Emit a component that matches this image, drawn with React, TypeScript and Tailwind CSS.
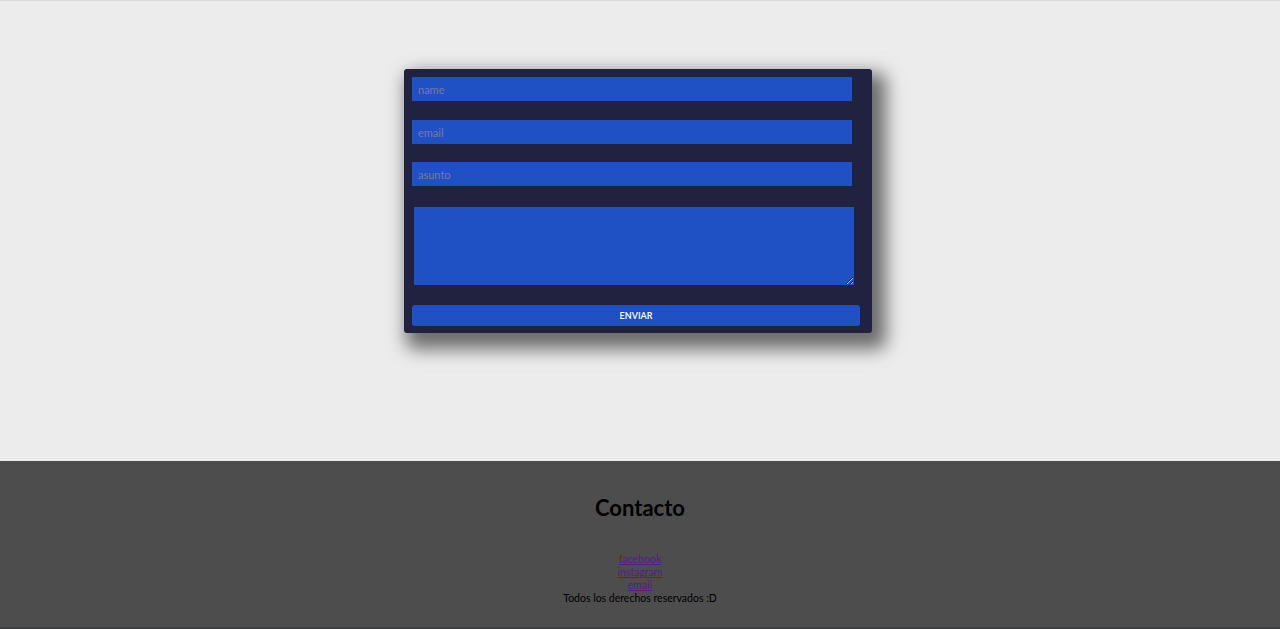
import React from 'react';

export default function App() {
  return (
    <div className="min-h-[629px] bg-[#ececec] font-['Lato','Open_Sans',sans-serif]">
      <main className="h-[461px] border-t border-[#dcdcdc] pt-[68px]">
        <form
          onSubmit={(e) => e.preventDefault()}
          className="ml-[calc(50%-236px)] flex w-[468px] flex-col rounded-[3px] bg-[#212240] p-2 pb-[7px] shadow-[8px_10px_18px_6px_rgba(0,0,0,0.55)]"
        >
          <input
            type="text"
            placeholder="name"
            className="h-6 w-[440px] bg-[#1f51c4] px-[6px] text-[11px] text-white outline-none placeholder:text-[#7a7a9a]"
          />
          <input
            type="email"
            placeholder="email"
            className="mt-[19px] h-6 w-[440px] bg-[#1f51c4] px-[6px] text-[11px] text-white outline-none placeholder:text-[#7a7a9a]"
          />
          <input
            type="text"
            placeholder="asunto"
            className="mt-[18px] h-6 w-[440px] bg-[#1f51c4] px-[6px] text-[11px] text-white outline-none placeholder:text-[#7a7a9a]"
          />
          <textarea className="mx-[2px] mt-[21px] h-[78px] w-[440px] resize bg-[#1f51c4] text-white outline-none" />
          <button
            type="submit"
            className="mt-5 h-[21px] w-[448px] rounded-[3px] bg-[#1f51c4] text-[9px] font-semibold text-white"
          >
            ENVIAR
          </button>
        </form>
      </main>

      <footer className="flex h-[168px] flex-col items-center border-b-2 border-[#3b4048] bg-[#4d4d4d] pt-[33px] text-black">
        <h2 className="text-[22px] font-bold leading-7">Contacto</h2>
        <div className="mt-[31px] flex flex-col items-center text-[10.5px] leading-[13px]">
          <a href="#" className="text-[#551a8b] underline">facebook</a>
          <a href="#" className="text-[#551a8b] underline">instagram</a>
          <a href="#" className="text-[#551a8b] underline">email</a>
          <p>Todos los derechos reservados :D</p>
        </div>
      </footer>
    </div>
  );
}
